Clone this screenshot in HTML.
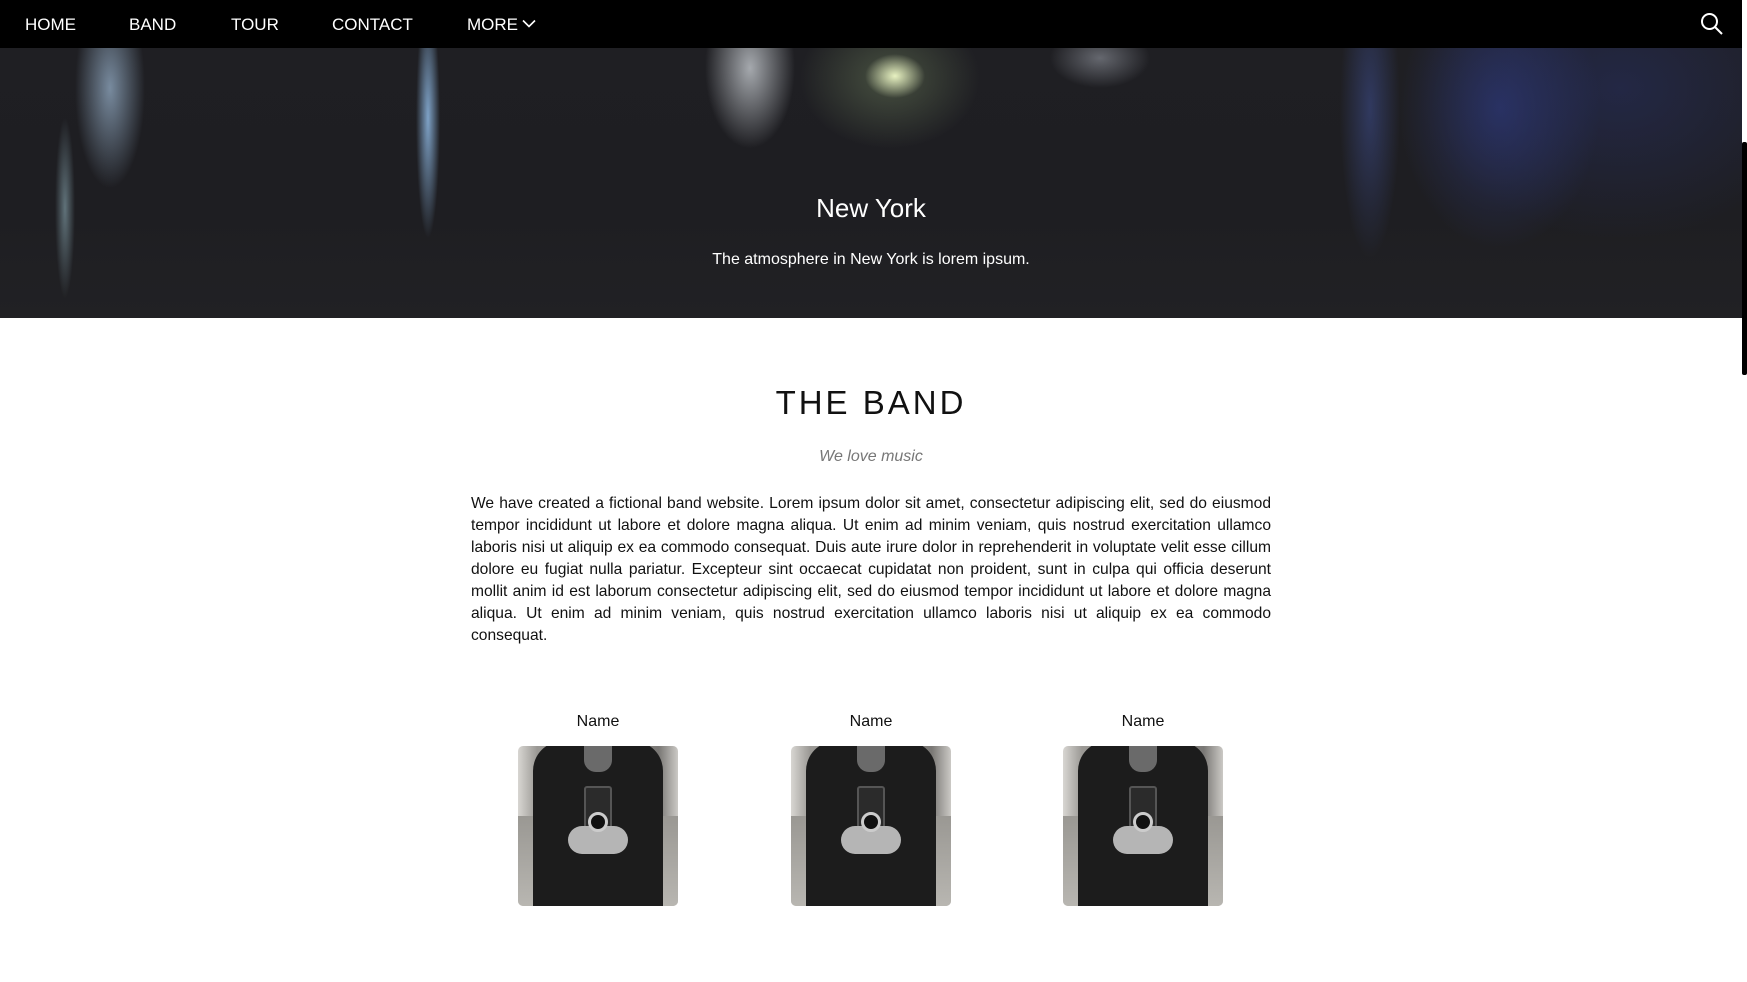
<!DOCTYPE html>
<html><head><meta charset="utf-8">
<style>
*{margin:0;padding:0;box-sizing:border-box}
html,body{width:1747px;height:982px;overflow:hidden;background:#fff;font-family:"Liberation Sans",Arial,sans-serif}
.nav{position:absolute;left:0;top:0;width:1742px;height:48px;background:#000;color:#fff;font-size:17px}
.nav span{position:absolute;top:15px;line-height:19px}
.hero{position:absolute;left:0;top:48px;width:1742px;height:270px;overflow:hidden;
background:
radial-gradient(ellipse 30px 22px at 895px 28px,rgba(240,250,200,.95),rgba(0,0,0,0) 100%),
radial-gradient(ellipse 90px 70px at 890px 30px,rgba(120,140,100,.45),rgba(0,0,0,0) 100%),
radial-gradient(ellipse 45px 80px at 750px 20px,rgba(210,215,220,.75),rgba(0,0,0,0) 100%),
radial-gradient(ellipse 50px 30px at 1100px 10px,rgba(170,175,185,.5),rgba(0,0,0,0) 100%),
radial-gradient(ellipse 35px 100px at 110px 40px,rgba(150,175,200,.75),rgba(0,0,0,0) 100%),
radial-gradient(ellipse 10px 90px at 65px 160px,rgba(140,170,180,.6),rgba(0,0,0,0) 100%),
radial-gradient(ellipse 12px 120px at 428px 70px,rgba(150,195,240,.8),rgba(0,0,0,0) 100%),
radial-gradient(ellipse 100px 140px at 1500px 60px,rgba(50,65,150,.5),rgba(0,0,0,0) 100%),
radial-gradient(ellipse 30px 150px at 1370px 60px,rgba(70,90,170,.45),rgba(0,0,0,0) 100%),
radial-gradient(ellipse 200px 150px at 1620px 40px,rgba(40,50,110,.45),rgba(0,0,0,0) 100%),
linear-gradient(#1f1f23,#1e1e22 60%,#212124);}
.hero h1{position:absolute;left:0;width:1742px;top:145px;text-align:center;color:#fff;font-weight:normal;font-size:26px}
.hero p{position:absolute;left:0;width:1742px;top:203px;text-align:center;color:#fff;font-size:16px}
.sb{position:absolute;left:1742px;top:142px;width:5px;height:233px;background:#000;border-radius:2px}
h2{position:absolute;left:0;width:1742px;top:384px;text-align:center;font-weight:normal;font-size:33px;letter-spacing:3px;color:#111}
.sub{position:absolute;left:0;width:1742px;top:448px;text-align:center;font-style:italic;color:#777;font-size:16px}
.txt{position:absolute;left:471px;width:800px;top:493px;font-size:15.6px;line-height:22px;text-align:justify;color:#111}
.col{position:absolute;top:713px;width:200px;text-align:center;font-size:16px;color:#111}
.img{position:absolute;top:746px;width:160px;height:160px;border-radius:5px;overflow:hidden;
background:linear-gradient(90deg,#d8d6d2,#9a9894 12%,#7a7875 88%,#cbc9c5);}
.img .g{position:absolute;left:0;right:0;bottom:0;height:90px;background:linear-gradient(#9a9893,#b8b6b1)}
.img .b{position:absolute;left:15px;right:15px;top:-5px;bottom:-10px;background:#1c1c1c;border-radius:30px 30px 0 0}
.img .n{position:absolute;left:66px;top:0;width:28px;height:26px;background:#6a6a6a;border-radius:0 0 12px 12px}
.img .c{position:absolute;left:66px;top:40px;width:28px;height:50px;background:#2b2b2b;border:2px solid #555;border-radius:3px}
.img .h{position:absolute;left:50px;top:80px;width:60px;height:28px;border-radius:14px;background:#b5b5b5}
.img .l{position:absolute;left:70px;top:66px;width:20px;height:20px;border-radius:50%;border:3px solid #ccc;background:#111}
</style></head><body>
<div class="nav">
<span style="left:25px">HOME</span>
<span style="left:129px">BAND</span>
<span style="left:231px">TOUR</span>
<span style="left:332px">CONTACT</span>
<span style="left:467px">MORE</span>
<svg style="position:absolute;left:522px;top:19px" width="14" height="9" viewBox="0 0 14 9"><path d="M1 1.5L7 7.5L13 1.5" stroke="#fff" stroke-width="1.6" fill="none"/></svg>
<svg style="position:absolute;left:1700px;top:12px" width="24" height="24" viewBox="0 0 24 24"><circle cx="9.5" cy="9.5" r="7.5" stroke="#fff" stroke-width="2" fill="none"/><path d="M15 15L22 22" stroke="#fff" stroke-width="2"/></svg>
</div>
<div class="hero"><h1>New York</h1><p>The atmosphere in New York is lorem ipsum.</p></div>
<div class="sb"></div>
<h2>THE BAND</h2>
<div class="sub">We love music</div>
<div class="txt">We have created a fictional band website. Lorem ipsum dolor sit amet, consectetur adipiscing elit, sed do eiusmod tempor incididunt ut labore et dolore magna aliqua. Ut enim ad minim veniam, quis nostrud exercitation ullamco laboris nisi ut aliquip ex ea commodo consequat. Duis aute irure dolor in reprehenderit in voluptate velit esse cillum dolore eu fugiat nulla pariatur. Excepteur sint occaecat cupidatat non proident, sunt in culpa qui officia deserunt mollit anim id est laborum consectetur adipiscing elit, sed do eiusmod tempor incididunt ut labore et dolore magna aliqua. Ut enim ad minim veniam, quis nostrud exercitation ullamco laboris nisi ut aliquip ex ea commodo consequat.</div>
<div class="col" style="left:498px">Name</div>
<div class="col" style="left:771px">Name</div>
<div class="col" style="left:1043px">Name</div>
<div class="img" style="left:518px"><div class="g"></div><div class="b"></div><div class="n"></div><div class="c"></div><div class="h"></div><div class="l"></div></div>
<div class="img" style="left:791px"><div class="g"></div><div class="b"></div><div class="n"></div><div class="c"></div><div class="h"></div><div class="l"></div></div>
<div class="img" style="left:1063px"><div class="g"></div><div class="b"></div><div class="n"></div><div class="c"></div><div class="h"></div><div class="l"></div></div>
</body></html>
